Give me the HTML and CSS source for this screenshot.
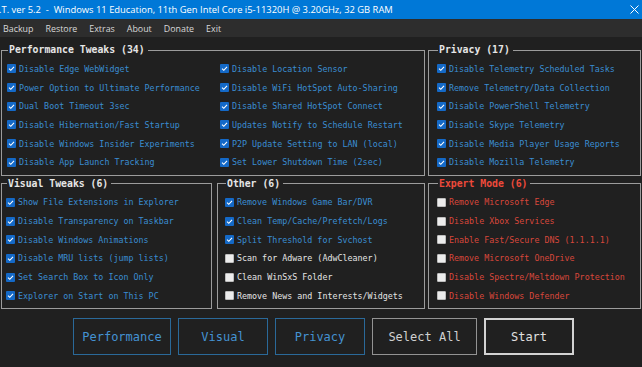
FILE: index.html
```html
<!DOCTYPE html>
<html>
<head>
<meta charset="utf-8">
<link rel="stylesheet" href="styles.css">
</head>
<body>
<div class="titlebar">
  <span class="title">.T. ver 5.2&nbsp;&nbsp;-&nbsp;&nbsp;Windows 11 Education, 11th Gen Intel Core i5-11320H @ 3.20GHz, 32 GB RAM</span>
  <svg class="close" width="9" height="9" viewBox="0 0 9 9"><path d="M0.5 0.5L8.5 8.5M8.5 0.5L0.5 8.5" stroke="#fff" stroke-width="1"/></svg>
</div>
<div class="menubar">
  <span>Backup</span><span>Restore</span><span>Extras</span><span>About</span><span>Donate</span><span>Exit</span>
</div>
<div class="main">
  <div class="row">
    <fieldset class="group perf">
      <legend>Performance Tweaks (34)</legend>
      <div class="cols">
        <div class="col col-a">
          <div class="item on"><span class="box"></span>Disable Edge WebWidget</div>
          <div class="item on"><span class="box"></span>Power Option to Ultimate Performance</div>
          <div class="item on"><span class="box"></span>Dual Boot Timeout 3sec</div>
          <div class="item on"><span class="box"></span>Disable Hibernation/Fast Startup</div>
          <div class="item on"><span class="box"></span>Disable Windows Insider Experiments</div>
          <div class="item on"><span class="box"></span>Disable App Launch Tracking</div>
        </div>
        <div class="col">
          <div class="item on"><span class="box"></span>Disable Location Sensor</div>
          <div class="item on"><span class="box"></span>Disable WiFi HotSpot Auto-Sharing</div>
          <div class="item on"><span class="box"></span>Disable Shared HotSpot Connect</div>
          <div class="item on"><span class="box"></span>Updates Notify to Schedule Restart</div>
          <div class="item on"><span class="box"></span>P2P Update Setting to LAN (local)</div>
          <div class="item on"><span class="box"></span>Set Lower Shutdown Time (2sec)</div>
        </div>
      </div>
    </fieldset>
    <fieldset class="group privacy">
      <legend>Privacy (17)</legend>
      <div class="col">
        <div class="item on"><span class="box"></span>Disable Telemetry Scheduled Tasks</div>
        <div class="item on"><span class="box"></span>Remove Telemetry/Data Collection</div>
        <div class="item on"><span class="box"></span>Disable PowerShell Telemetry</div>
        <div class="item on"><span class="box"></span>Disable Skype Telemetry</div>
        <div class="item on"><span class="box"></span>Disable Media Player Usage Reports</div>
        <div class="item on"><span class="box"></span>Disable Mozilla Telemetry</div>
      </div>
    </fieldset>
  </div>
  <div class="row row2">
    <fieldset class="group visual">
      <legend>Visual Tweaks (6)</legend>
      <div class="col">
        <div class="item on"><span class="box"></span>Show File Extensions in Explorer</div>
        <div class="item on"><span class="box"></span>Disable Transparency on Taskbar</div>
        <div class="item on"><span class="box"></span>Disable Windows Animations</div>
        <div class="item on"><span class="box"></span>Disable MRU lists (jump lists)</div>
        <div class="item on"><span class="box"></span>Set Search Box to Icon Only</div>
        <div class="item on"><span class="box"></span>Explorer on Start on This PC</div>
      </div>
    </fieldset>
    <fieldset class="group other">
      <legend>Other (6)</legend>
      <div class="col">
        <div class="item on"><span class="box"></span>Remove Windows Game Bar/DVR</div>
        <div class="item on"><span class="box"></span>Clean Temp/Cache/Prefetch/Logs</div>
        <div class="item on"><span class="box"></span>Split Threshold for Svchost</div>
        <div class="item off"><span class="box"></span>Scan for Adware (AdwCleaner)</div>
        <div class="item off"><span class="box"></span>Clean WinSxS Folder</div>
        <div class="item off"><span class="box"></span>Remove News and Interests/Widgets</div>
      </div>
    </fieldset>
    <fieldset class="group expert">
      <legend>Expert Mode (6)</legend>
      <div class="col">
        <div class="item off"><span class="box"></span>Remove Microsoft Edge</div>
        <div class="item off"><span class="box"></span>Disable Xbox Services</div>
        <div class="item off"><span class="box"></span>Enable Fast/Secure DNS (1.1.1.1)</div>
        <div class="item off"><span class="box"></span>Remove Microsoft OneDrive</div>
        <div class="item off"><span class="box"></span>Disable Spectre/Meltdown Protection</div>
        <div class="item off"><span class="box"></span>Disable Windows Defender</div>
      </div>
    </fieldset>
  </div>
  <div class="buttons">
    <div class="btn blue w-perf">Performance</div>
    <div class="btn blue w-90">Visual</div>
    <div class="btn blue w-90">Privacy</div>
    <div class="btn gray w-sel">Select All</div>
    <div class="btn light w-90">Start</div>
  </div>
</div>
</body>
</html>
```
FILE: styles.css
```css
* { box-sizing: border-box; }
html, body {
  margin: 0;
  padding: 0;
  width: 642px;
  height: 367px;
  overflow: hidden;
  background: #202020;
}
body {
  font-family: "DejaVu Sans Mono", "Liberation Mono", monospace;
}
.titlebar {
  height: 19px;
  background: #0078d7;
  display: flex;
  align-items: center;
  justify-content: space-between;
  padding: 0 3px 1px 0;
}
.title {
  font-family: "Open Sans", "Noto Sans", sans-serif;
  font-size: 9.4px;
  color: #ffffff;
  white-space: nowrap;
  margin-left: -1px;
}
.close { display: block; }
.menubar {
  height: 18px;
  background: #2d2d2d;
  display: flex;
  align-items: center;
  gap: 12px;
  padding-left: 3px;
  font-family: "Open Sans", "Noto Sans", sans-serif;
  font-size: 8.9px;
  color: #d8d8d8;
}
.main {
  padding: 7px 0 0 1px;
}
.row {
  display: flex;
  gap: 3px;
}
.row2 { margin-top: 2px; }
.row2 .visual { margin-right: 2px; }
.group {
  margin: 0;
  padding: 3.6px 0 3px 0;
  border: 1px solid #9c9c9c;
  min-width: 0;
}
.group legend {
  margin-left: 1px;
  padding: 0 3px 0 1px;
  font-weight: bold;
  font-size: 9.8px;
  line-height: 12px;
  color: #e6e6e6;
}
.expert legend { color: #ee4a3b; }
.perf { width: 424px; padding-left: 5px; }
.privacy { width: 213px; padding-left: 8px; }
.visual { width: 211px; padding-left: 4px; }
.other { width: 208px; padding-left: 7px; }
.expert { width: 213px; padding-left: 8px; }
.cols { display: flex; }
.col-a { width: 213px; }
.item {
  display: flex;
  align-items: center;
  height: 18.67px;
  font-size: 8.35px;
  white-space: nowrap;
  color: #3a8dd2;
}
.item.off { color: #e4e4e4; }
.expert .item.off { color: #d8473b; }
.box {
  width: 9px;
  height: 9px;
  margin-right: 3px;
  border-radius: 1px;
  flex: none;
}
.on .box {
  background: #1469c7 url("data:image/svg+xml;utf8,<svg xmlns='http://www.w3.org/2000/svg' width='9' height='9' viewBox='0 0 9 9'><path d='M2 4.6L3.8 6.3L7 2.8' fill='none' stroke='white' stroke-width='1.1'/></svg>") no-repeat center;
}
.off .box {
  background: #ececec;
  border: 1px solid #bdbdbd;
}
.buttons {
  display: flex;
  gap: 7px;
  padding-left: 72px;
  margin-top: 9px;
}
.btn {
  height: 37px;
  display: flex;
  align-items: center;
  justify-content: center;
  font-size: 12px;
}
.w-perf { width: 98px; }
.w-90 { width: 90px; }
.w-sel { width: 105px; }
.blue { border: 1px solid #2a6999; color: #4492d2; }
.gray { border: 1px solid #939393; color: #d0d0d0; }
.light { border: 2px solid #d2d2d2; color: #e0e0e0; }
```
